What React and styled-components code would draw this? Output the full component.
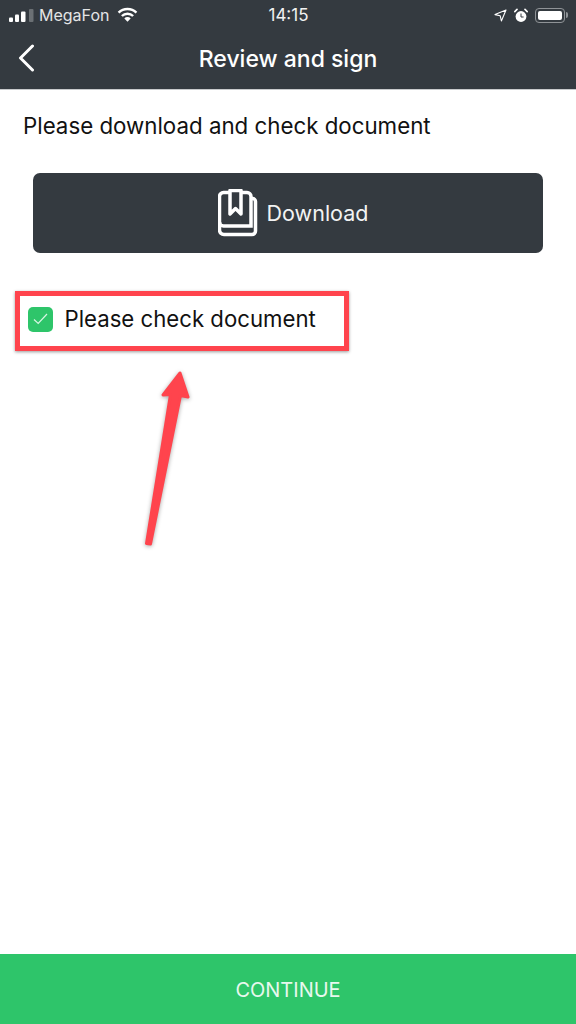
import React from 'react'
import styled, { createGlobalStyle } from 'styled-components'

const GlobalStyle = createGlobalStyle`
  html, body {
    margin: 0;
    padding: 0;
    background: #fff;
  }
  body {
    font-family: Inter, "Liberation Sans", sans-serif;
  }
`

const App = () => (
  <Page>
    <GlobalStyle />
    <Header>
      <StatusBar>
        <StatusSide>
          <Signal viewBox="0 0 25 13" aria-hidden="true">
            <rect x="0" y="8.500" width="4" height="4.500" rx="1" fill="#fff" />
            <rect x="6" y="5.500" width="4" height="7.500" rx="1" fill="#fff" />
            <rect x="12" y="2.500" width="4.500" height="10.500" rx="1" fill="#fff" />
            <rect x="20" y="0" width="4.500" height="13" rx="1" fill="#6b7074" />
          </Signal>
          <Carrier>MegaFon</Carrier>
          <Wifi viewBox="0 0 22 16" aria-hidden="true">
            <path d="M1.500 6 A13.500 13.500 0 0 1 20.500 6" fill="none" stroke="#fff" strokeWidth="2.600" />
            <path d="M5 9.600 A8.600 8.600 0 0 1 17 9.600" fill="none" stroke="#fff" strokeWidth="2.600" />
            <path d="M7.600 12.200 A4.800 4.800 0 0 1 14.400 12.200 L11 15.600 Z" fill="#fff" />
          </Wifi>
        </StatusSide>
        <Clock>14:15</Clock>
        <StatusSide $end>
          <StatusIcon width="13" height="13" viewBox="0 0 13 13" aria-hidden="true">
            <path d="M12 1 L1 5.600 L6.200 6.800 L7.400 12 Z" fill="none" stroke="#fff" strokeWidth="1.100" strokeLinejoin="round" />
          </StatusIcon>
          <StatusIcon width="14" height="15" viewBox="0 0 14 15" aria-hidden="true">
            <circle cx="7" cy="8.500" r="5.400" fill="#fff" />
            <path d="M7 5.500 V9 H9.600" fill="none" stroke="#343a40" strokeWidth="1" />
            <path d="M0.800 3.600 L3 1.400 M13.200 3.600 L11 1.400" stroke="#fff" strokeWidth="1.600" strokeLinecap="round" />
          </StatusIcon>
          <Battery>
            <BatteryLevel />
          </Battery>
        </StatusSide>
      </StatusBar>
      <NavBar>
        <BackIcon width="18" height="28" viewBox="0 0 18 28" aria-hidden="true">
          <path d="M15.500 2 L3.500 14 L15.500 26" fill="none" stroke="#fff" strokeWidth="3" strokeLinecap="round" strokeLinejoin="round" />
        </BackIcon>
        <Title>Review and sign</Title>
      </NavBar>
    </Header>

    <Content>
      <Intro>Please download and check document</Intro>
      <DownloadButton type="button">
        <svg width="40" height="48" viewBox="0 0 40 48" aria-hidden="true">
          <path d="M5.500 3.500 H29 A4 4 0 0 1 33 7.500 V37 H5.500 A4 4 0 0 1 1.500 33 V7.500 A4 4 0 0 1 5.500 3.500 Z" fill="none" stroke="#fff" strokeWidth="3.500" />
          <path d="M33 9.500 H34.500 A3 3 0 0 1 37.500 12.500 V42 A3.500 3.500 0 0 1 34 45.500 H6 A4.500 4.500 0 0 1 1.500 41 V33" fill="none" stroke="#fff" strokeWidth="3.500" />
          <path d="M12 1.500 H23 V25 L17.500 19.500 L12 25 Z" fill="#343a40" stroke="#fff" strokeWidth="3.500" strokeLinejoin="round" />
        </svg>
        <span>Download</span>
      </DownloadButton>
      <CheckRow>
        <CheckBox>
          <svg width="15" height="12" viewBox="0 0 15 12" aria-hidden="true">
            <path d="M1 6.500 L5.200 10.500 L14 1" fill="none" stroke="#d8f5e3" strokeWidth="1.200" />
          </svg>
        </CheckBox>
        <CheckLabel>Please check document</CheckLabel>
      </CheckRow>
      <Highlight />
      <Arrow width="60" height="190" viewBox="0 0 60 190" aria-hidden="true">
        <path d="M40 3 L48 27 L40.500 25.500 L10.500 174 L6.500 173.500 L30.500 24.500 L23 25 Z" fill="#ff444d" stroke="#ff444d" strokeWidth="3" strokeLinejoin="round" />
      </Arrow>
    </Content>

    <ContinueBar type="button">CONTINUE</ContinueBar>
  </Page>
)

const Page = styled.div`
  position: relative;
  display: flex;
  flex-direction: column;
  width: 576px;
  height: 1024px;
  overflow: hidden;
  background: #fff;
`
const Header = styled.header`
  display: flex;
  flex-direction: column;
  height: 89px;
  background: #343a40;
  border-bottom: 1px solid #c8cacc;
  color: #fff;
`
const StatusBar = styled.div`
  display: grid;
  grid-template-columns: 1fr auto 1fr;
  align-items: center;
  height: 30px;
  padding: 0 8px 0 9px;
`
const StatusSide = styled.div`
  display: flex;
  align-items: center;
  justify-content: ${props => props.$end ? 'flex-end' : 'flex-start'};
  gap: ${props => props.$end ? '7px' : '0'};
`
const Signal = styled.svg`
  width: 25px;
  height: 13px;
`
const Carrier = styled.span`
  margin-left: 5px;
  font-size: 16px;
  color: #e4e5e6;
`
const Wifi = styled.svg`
  width: 21px;
  height: 15px;
  margin-left: 8px;
  margin-top: -1px;
`
const Clock = styled.span`
  font-size: 17px;
  color: #f2f2f2;
`
const StatusIcon = styled.svg`
  display: block;
`
const Battery = styled.div`
  position: relative;
  display: flex;
  box-sizing: border-box;
  width: 30px;
  height: 15px;
  margin-right: 3px;
  padding: 2px;
  border: 1px solid #8f9397;
  border-radius: 4px;
  &::after {
    content: '';
    position: absolute;
    right: -4px;
    top: 3px;
    width: 2px;
    height: 6px;
    background: #8f9397;
    border-radius: 0 2px 2px 0;
  }
`
const BatteryLevel = styled.div`
  flex: 1;
  background: #fff;
  border-radius: 2px;
`
const NavBar = styled.div`
  position: relative;
  display: flex;
  align-items: center;
  justify-content: center;
  height: 58px;
`
const BackIcon = styled.svg`
  position: absolute;
  left: 17px;
  top: 14px;
`
const Title = styled.h1`
  margin: 0;
  font-size: 23px;
  font-weight: 500;
`
const Content = styled.main`
  position: relative;
  flex: 1;
  display: flex;
  flex-direction: column;
  align-items: flex-start;
`
const Intro = styled.p`
  margin: 23px 0 0 23px;
  font-size: 22.3px;
  line-height: 26px;
  color: #111;
`
const DownloadButton = styled.button`
  display: flex;
  align-items: center;
  justify-content: center;
  gap: 9px;
  width: 510px;
  height: 80px;
  margin: 34px 0 0 33px;
  padding: 0 0 0 10px;
  background: #343a40;
  border: 0;
  border-radius: 7px;
  color: #f2f3f3;
  font-family: inherit;
  font-size: 21.5px;
`
const CheckRow = styled.label`
  display: flex;
  align-items: center;
  gap: 11.5px;
  margin: 53px 0 0 28px;
`
const CheckBox = styled.span`
  display: flex;
  align-items: center;
  justify-content: center;
  width: 25px;
  height: 25px;
  background: #2ec56a;
  border-radius: 5px;
`
const CheckLabel = styled.span`
  font-size: 22.2px;
  line-height: 26px;
  color: #111;
`
const Highlight = styled.div`
  position: absolute;
  left: 15px;
  top: 201px;
  box-sizing: border-box;
  width: 334px;
  height: 60px;
  border: 5px solid #ff444d;
  box-shadow: 0 1px 3px rgba(0, 0, 0, 0.4);
`
const Arrow = styled.svg`
  position: absolute;
  left: 140px;
  top: 280px;
  filter: drop-shadow(0 1px 2px rgba(0, 0, 0, 0.35));
`
const ContinueBar = styled.button`
  display: block;
  width: 100%;
  height: 70px;
  padding: 2px 0 0;
  background: #2ec56a;
  border: 0;
  color: #e8f8ee;
  font-family: inherit;
  font-size: 20px;
`

export default App
